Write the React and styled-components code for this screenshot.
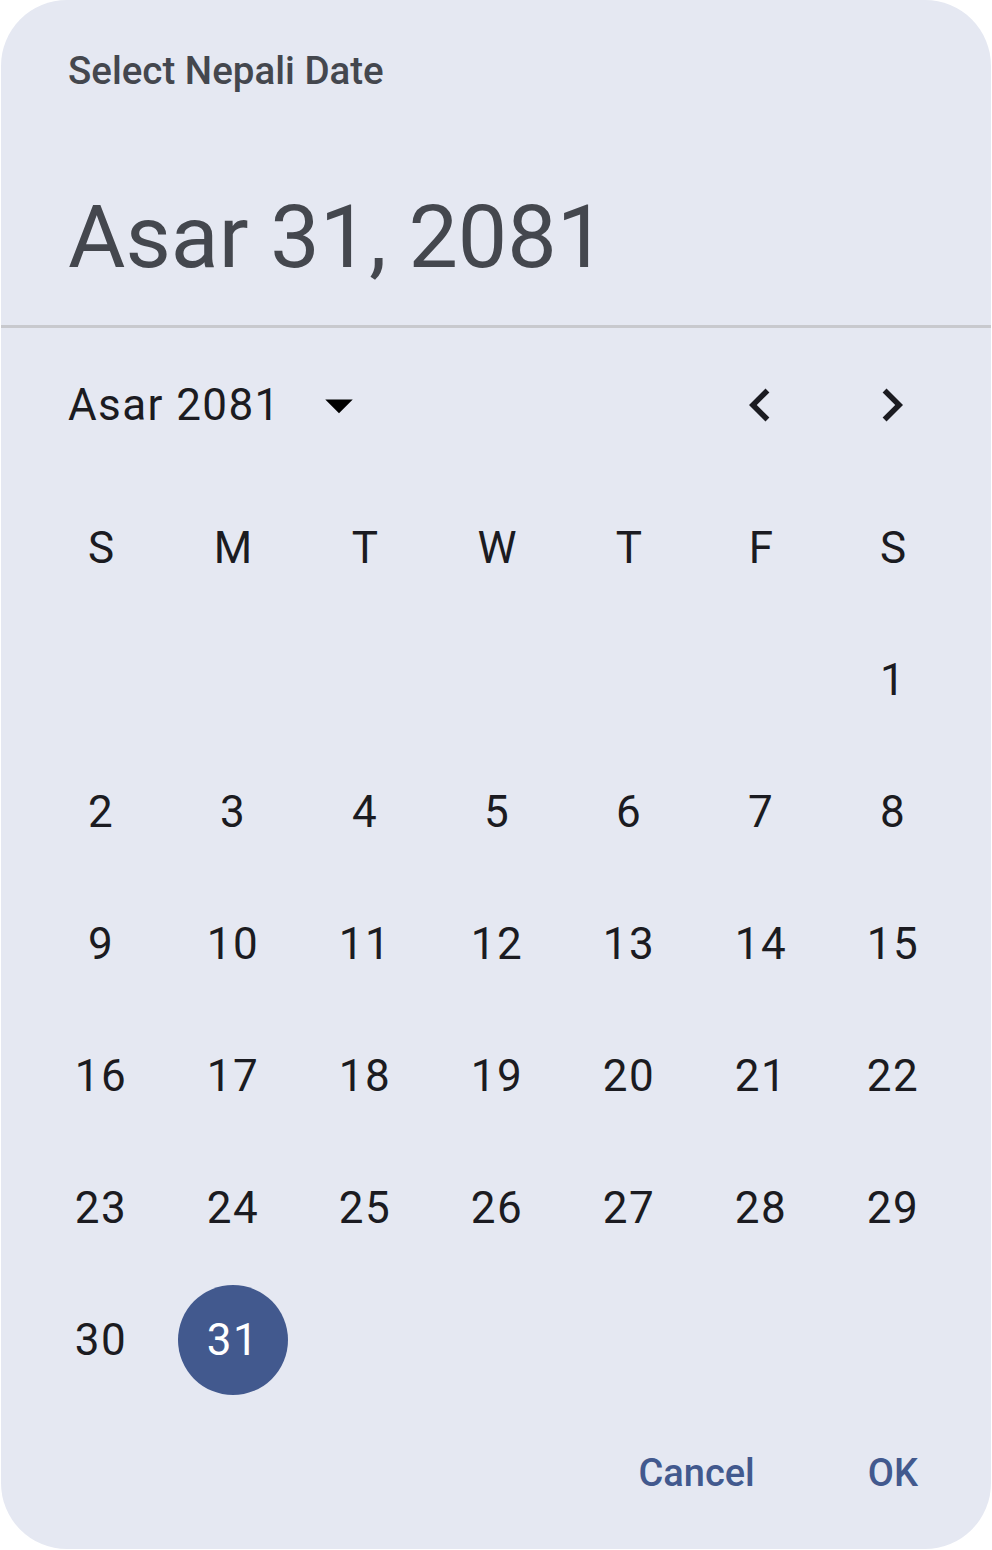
import React from "react";
import styled, { createGlobalStyle } from "styled-components";

const Global = createGlobalStyle`
  html, body { margin: 0; padding: 0; background: #ffffff; }
  body { font-family: Roboto, "Noto Sans", sans-serif; }
  * { box-sizing: border-box; }
`;

const Page = styled.div`
  padding: 0 1px 1px 1px;
`;

const Card = styled.div`
  width: 990px;
  height: 1549px;
  background: #e5e8f2;
  border-radius: 66px;
  display: flex;
  flex-direction: column;
  overflow: hidden;
`;

const Header = styled.div`
  display: flex;
  flex-direction: column;
  padding: 49px 66px 33px 67px;
  gap: 89px;
`;

const Title = styled.div`
  font-size: 38.5px;
  line-height: 44px;
  font-weight: 500;
  color: #44474e;
`;

const Headline = styled.div`
  font-size: 88px;
  line-height: 110px;
  font-weight: 400;
  color: #44474e;
`;

const Divider = styled.div`
  height: 3px;
  background: #c8c9ce;
`;

const MonthRow = styled.div`
  margin-top: 22px;
  height: 110px;
  display: flex;
  align-items: center;
  padding: 0 33px 0 67px;
`;

const MonthPicker = styled.button`
  all: unset;
  display: flex;
  align-items: center;
  gap: 25px;
  cursor: pointer;
  flex: 1;
`;

const MonthLabel = styled.span`
  font-size: 44px;
  line-height: 44px;
  letter-spacing: 1.4px;
  color: #1b1b21;
`;

const NavGroup = styled.div`
  display: flex;
  align-items: center;
`;

const IconButton = styled.button`
  all: unset;
  width: 132px;
  height: 110px;
  display: flex;
  align-items: center;
  justify-content: center;
  cursor: pointer;
  color: #1b1b21;
`;

const Grid = styled.div`
  margin-top: 22px;
  padding-left: 34px;
  display: grid;
  grid-template-columns: repeat(7, 132px);
  grid-auto-rows: 132px;
`;

const Cell = styled.div`
  display: flex;
  align-items: center;
  justify-content: center;
`;

const Weekday = styled.span`
  font-size: 44px;
  line-height: 44px;
  color: #1b1b21;
`;

const Day = styled.span`
  width: 110px;
  height: 110px;
  border-radius: 50%;
  display: flex;
  align-items: center;
  justify-content: center;
  font-size: 44px;
  line-height: 44px;
  letter-spacing: 1.4px;
  color: ${(p) => (p.$selected ? "#ffffff" : "#1b1b21")};
  background: ${(p) => (p.$selected ? "#42598e" : "transparent")};
`;

const Actions = styled.div`
  margin-top: 12px;
  height: 110px;
  display: flex;
  justify-content: flex-end;
  align-items: center;
  gap: 47px;
  padding-right: 40px;
`;

const TextButton = styled.button`
  all: unset;
  height: 110px;
  padding: 0 33px;
  display: flex;
  align-items: center;
  font-size: 38px;
  font-weight: 500;
  color: #42598e;
  cursor: pointer;
`;

const Icon = ({ d, size = 66 }) => (
  <svg width={size} height={size} viewBox="0 0 24 24" fill="currentColor">
    <path d={d} />
  </svg>
);

const weekdays = ["S", "M", "T", "W", "T", "F", "S"];
const offset = 6;
const days = 31;
const selected = 31;

export default function App() {
  const cells = [];
  for (let i = 0; i < offset; i++) cells.push(null);
  for (let d = 1; d <= days; d++) cells.push(d);

  return (
    <Page>
      <Global />
      <Card>
        <Header>
          <Title>Select Nepali Date</Title>
          <Headline>Asar 31, 2081</Headline>
        </Header>
        <Divider />
        <MonthRow>
          <MonthPicker>
            <MonthLabel>Asar 2081</MonthLabel>
            <Icon d="M7 10l5 5 5-5z" />
          </MonthPicker>
          <NavGroup>
            <IconButton aria-label="Previous month">
              <Icon d="M15.41 7.41L14 6l-6 6 6 6 1.41-1.41L10.83 12z" />
            </IconButton>
            <IconButton aria-label="Next month">
              <Icon d="M10 6L8.59 7.41 13.17 12l-4.58 4.59L10 18l6-6z" />
            </IconButton>
          </NavGroup>
        </MonthRow>
        <Grid>
          {weekdays.map((w, i) => (
            <Cell key={"w" + i}>
              <Weekday>{w}</Weekday>
            </Cell>
          ))}
          {cells.map((d, i) => (
            <Cell key={"d" + i}>
              {d && <Day $selected={d === selected}>{d}</Day>}
            </Cell>
          ))}
        </Grid>
        <Actions>
          <TextButton>Cancel</TextButton>
          <TextButton>OK</TextButton>
        </Actions>
      </Card>
    </Page>
  );
}
